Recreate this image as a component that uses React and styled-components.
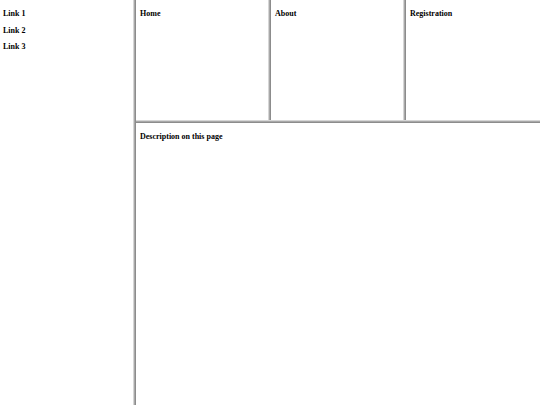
import React from 'react'
import styled, { createGlobalStyle } from 'styled-components'

const Global = createGlobalStyle`
    html, body {
        margin: 0;
        padding: 0;
        background: #ffffff;
    }
    #root {
        height: 100vh;
    }
`

export default function App(){
    return(
    <>
        <Global />
        <Page>
            <Side>
                <Label>Link 1</Label>
                <Label>Link 2</Label>
                <Label>Link 3</Label>
            </Side>
            <VBar />
            <Main>
                <TopRow>
                    <Frame width = '132px'><Label>Home</Label></Frame>
                    <VBar />
                    <Frame width = '132px'><Label>About</Label></Frame>
                    <VBar />
                    <Frame><Label>Registration</Label></Frame>
                </TopRow>
                <HBar />
                <Frame><Label>Description on this page</Label></Frame>
            </Main>
        </Page>
    </>
    )
}

const Page = styled.div`
    display: grid;
    grid-template-columns: 133px 3px 1fr;
    height: 100%;
    overflow: hidden;
`

const Side = styled.div`
    padding: 0 3px;
    display: flex;
    flex-flow: column;
    gap: 7.5px;
`

const Main = styled.div`
    display: grid;
    grid-template-rows: 120px 3px 1fr;
    min-width: 0;
`

const TopRow = styled.div`
    display: flex;
`

const Frame = styled.div`
    width: ${p => p.width || 'auto'};
    flex: ${p => p.width ? 'none' : '1'};
    padding: 0 4px;
    box-sizing: border-box;
`

const Label = styled.div`
    margin-top: 9px;
    font-family: 'Liberation Serif', 'Times New Roman', serif;
    font-weight: bold;
    font-size: 8px;
    line-height: 9px;
    color: #000;
    white-space: nowrap;
    & + & {
        margin-top: 0;
    }
`

const VBar = styled.div`
    width: 3px;
    box-sizing: border-box;
    background: #a8a8a8;
    border-left: 1px solid #d6d6d6;
    border-right: 1px solid #8c8c8c;
`

const HBar = styled.div`
    height: 3px;
    box-sizing: border-box;
    background: #a8a8a8;
    border-top: 1px solid #d6d6d6;
    border-bottom: 1px solid #8c8c8c;
`
